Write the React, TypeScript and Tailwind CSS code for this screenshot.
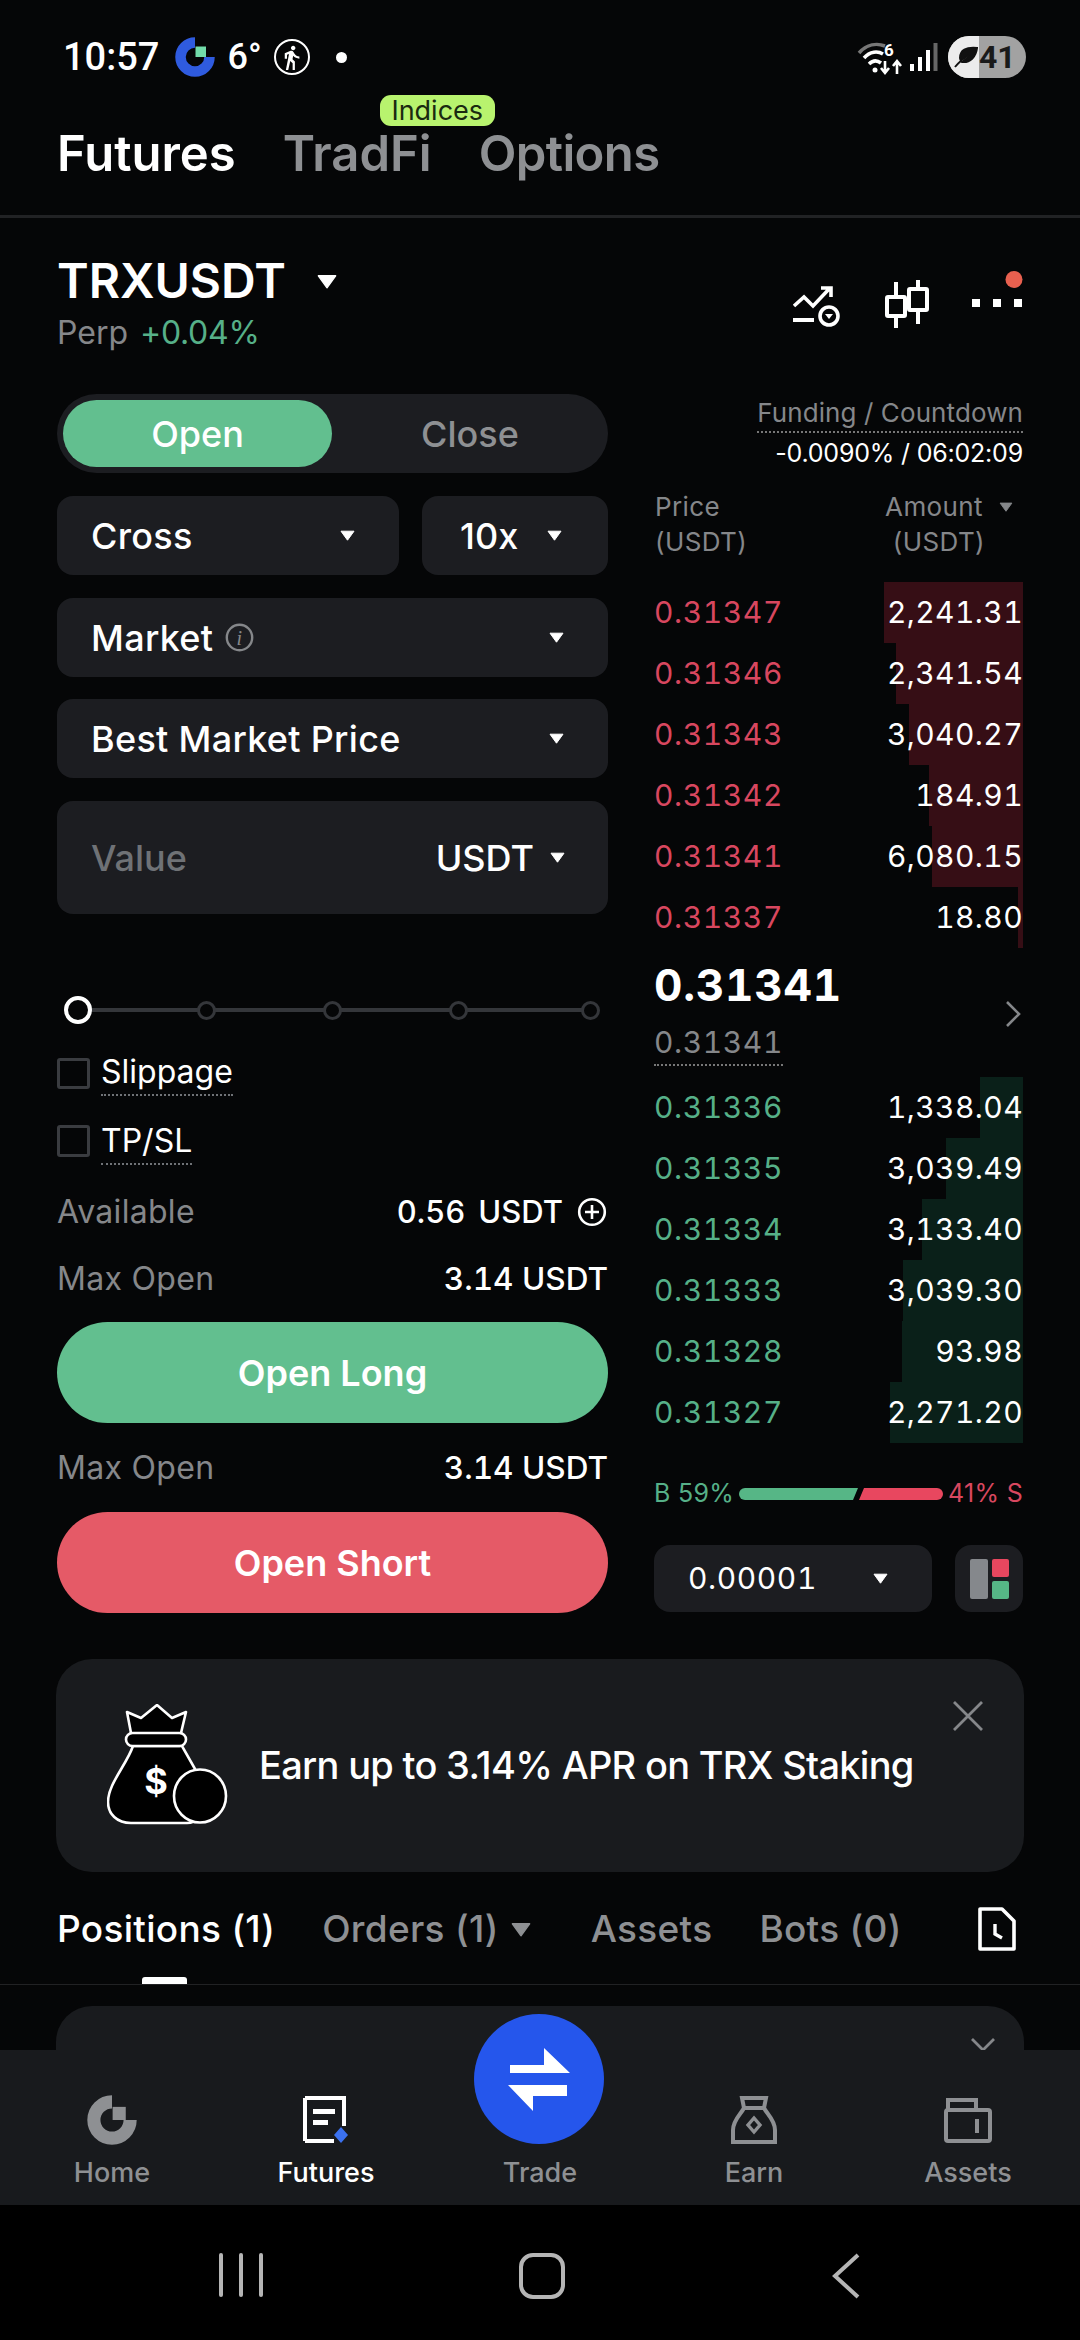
import React from "react";
import { MdDirectionsWalk } from "react-icons/md";

const asks = [
  ["0.31347", "2,241.31", 139],
  ["0.31346", "2,341.54", 127],
  ["0.31343", "3,040.27", 114],
  ["0.31342", "184.91", 94],
  ["0.31341", "6,080.15", 91],
  ["0.31337", "18.80", 5],
] as const;
const bids = [
  ["0.31336", "1,338.04", 43],
  ["0.31335", "3,039.49", 77],
  ["0.31334", "3,133.40", 101],
  ["0.31333", "3,039.30", 120],
  ["0.31328", "93.98", 121],
  ["0.31327", "2,271.20", 133],
] as const;

function Tri({ w = 15, h = 11, color = "#ffffff" }: { w?: number; h?: number; color?: string }) {
  return (
    <svg width={w} height={h} viewBox="0 0 15 11" className="shrink-0">
      <path d="M1 1.2 H14 L7.5 10.2 Z" fill={color} stroke={color} strokeWidth="1" strokeLinejoin="round" />
    </svg>
  );
}

function Logo({ size, ring, square }: { size: number; ring: string; square: string }) {
  return (
    <svg width={size} height={size} viewBox="0 0 40 40" className="shrink-0">
      <path d="M20 5.5 A14.5 14.5 0 1 0 34.5 20" fill="none" stroke={ring} strokeWidth="10.5" />
      <rect x="20.5" y="9.5" width="10.5" height="10.5" fill={square} />
    </svg>
  );
}

function Row({ price, amount, width, up }: { price: string; amount: string; width: number; up: boolean }) {
  return (
    <div className="relative flex h-[61px] items-center justify-between">
      <div className={`absolute inset-y-0 right-0 ${up ? "bg-[#0a2019]" : "bg-[#360e15]"}`} style={{ width }} />
      <span className={`relative text-[30px] tracking-[0.6px] tabular-nums ${up ? "text-[#56b088]" : "text-[#d8475f]"}`}>{price}</span>
      <span className="relative text-[30px] tracking-[0.4px] tabular-nums text-white">{amount}</span>
    </div>
  );
}

function Select({ label, className = "", children }: { label: string; className?: string; children?: React.ReactNode }) {
  return (
    <div className={`flex h-[79px] items-center justify-between rounded-[16px] bg-[#1c1d21] pl-[34px] pr-[44px] ${className}`}>
      <div className="flex items-center gap-[12px] text-[36px] font-medium tracking-[0.3px] text-white">
        {label}
        {children}
      </div>
      <Tri />
    </div>
  );
}

function Info({ label, value, extra }: { label: string; value: React.ReactNode; extra?: React.ReactNode }) {
  return (
    <div className="flex h-[40px] items-center justify-between text-[32px]">
      <span className="tracking-[0.3px] text-[#85878a]">{label}</span>
      <span className="flex items-center font-medium text-white">
        {value}
        {extra}
      </span>
    </div>
  );
}

function Dot({ large, className = "" }: { large?: boolean; className?: string }) {
  return large ? (
    <div className={`relative h-[28px] w-[28px] shrink-0 rounded-full border-[4px] border-white bg-[#050607] ${className}`} />
  ) : (
    <div className={`relative h-[19px] w-[19px] shrink-0 rounded-full border-[3px] border-[#34363a] bg-[#050607] ${className}`} />
  );
}

function NavItem({ label, active, children }: { label: string; active?: boolean; children?: React.ReactNode }) {
  return (
    <div className="flex flex-col items-center">
      <div className="flex h-[48px] items-center justify-center">{children}</div>
      <div className={`mt-[11px] text-[27px] leading-[36px] font-medium ${active ? "text-white" : "text-[#8e9093]"}`}>{label}</div>
    </div>
  );
}

export default function App() {
  return (
    <div className="flex h-[2340px] w-[1080px] flex-col overflow-hidden bg-[#000] [font-family:Inter,sans-serif]">
      <div className="h-[2050px] shrink-0 overflow-hidden bg-[#050607]">
        {/* status bar */}
        <div className="flex h-[114px] items-center justify-between pl-[63px] pr-[54px]">
          <div className="flex items-center">
            <span className="text-[38px] font-medium text-white [font-family:Roboto,sans-serif]">10:57</span>
            <span className="ml-[16px] flex">
              <Logo size={40} ring="#2f5bdf" square="#72dcaa" />
            </span>
            <span className="ml-[12px] text-[36px] font-medium text-white [font-family:Roboto,sans-serif]">6°</span>
            <span className="ml-[12px] flex h-[36px] w-[36px] items-center justify-center rounded-full border-[2px] border-white text-white">
              <MdDirectionsWalk size={27} />
            </span>
            <span className="ml-[26px] h-[11px] w-[11px] rounded-full bg-white" />
          </div>
          <div className="flex items-center">
            <svg width="50" height="36" viewBox="0 0 50 36" className="mt-[2px]">
              <path d="M2 13 C10 4 20 3 28 6" fill="none" stroke="#777" strokeWidth="3.5" />
              <path d="M7 18 C13 11 21 11 26 14" fill="none" stroke="#fff" strokeWidth="3.5" />
              <path d="M12 24 C16 20 20 20 24 23" fill="none" stroke="#fff" strokeWidth="3.5" />
              <circle cx="18" cy="30" r="2.5" fill="#fff" />
              <text x="27" y="16" fontSize="17" fontWeight="700" fill="#fff" fontFamily="Roboto">6</text>
              <path d="M28 21 V33 M24 28 L28 33 L32 28 M40 34 V22 M36 26 L40 21 L44 26" fill="none" stroke="#fff" strokeWidth="2.6" />
            </svg>
            <svg width="30" height="30" viewBox="0 0 30 30" className="ml-[1px] mr-[10px]">
              <rect x="2" y="22" width="4" height="7" fill="#fff" />
              <rect x="10" y="15" width="4" height="14" fill="#fff" />
              <rect x="18" y="8" width="4" height="21" fill="#fff" />
              <rect x="25.5" y="1" width="4" height="28" fill="#666" />
            </svg>
            <div className="relative flex h-[42px] w-[78px] items-center overflow-hidden rounded-full bg-[#a2a2a2]">
              <div className="absolute inset-y-0 left-0 w-[31px] bg-[#ececec]" />
              <svg width="24" height="24" viewBox="0 0 24 24" className="relative ml-[6px]">
                <path d="M23 3 C12 2 6 5 6 13 C6 15 7 16 8 17 C16 18 22 12 23 3 Z M1 22 C5 17 10 13 15 10" fill="#111" stroke="#111" strokeWidth="2" />
              </svg>
              <span className="relative ml-[1px] text-[32px] leading-none font-bold text-[#1a1a1a] [font-family:Roboto,sans-serif]">41</span>
            </div>
          </div>
        </div>

        {/* product tabs */}
        <div className="flex h-[104px] items-start gap-[47px] border-b-[3px] border-[#212224] pl-[57px] pt-[1px]">
          <span className="text-[49px] leading-[78px] font-semibold text-white">Futures</span>
          <span className="relative text-[49px] leading-[78px] font-semibold text-[#8e9093]">
            TradFi
            <span className="absolute left-[97px] top-[-20px] flex h-[31px] w-[115px] items-center justify-center rounded-[11px] bg-[#b8f36e] text-[27px] leading-none font-normal text-[#1a2a10]">
              Indices
            </span>
          </span>
          <span className="text-[49px] leading-[78px] font-semibold tracking-[-0.6px] text-[#8e9093]">Options</span>
        </div>

        {/* symbol */}
        <div className="flex items-start justify-between px-[57px] pt-[40px]">
          <div>
            <div className="flex h-[46px] items-center">
              <span className="text-[48px] font-semibold text-white">TRXUSDT</span>
              <span className="ml-[31px]"><Tri w={20} h={15} /></span>
            </div>
            <div className="mt-[9px] flex h-[40px] items-center gap-[12px] text-[32px]">
              <span className="text-[#85878a]">Perp</span>
              <span className="tracking-[-0.3px] text-[#56b088]">+0.04%</span>
            </div>
          </div>
          <div className="flex h-[66px] items-start">
            <svg width="50" height="42" viewBox="0 0 50 42" className="mt-[27px] text-white">
              <path d="M1 21 L11 12 L20 21 L37 3 M28 3 H38 V12" fill="none" stroke="currentColor" strokeWidth="3.6" />
              <rect x="0" y="33" width="21" height="4" fill="currentColor" />
              <circle cx="36" cy="31" r="9" fill="none" stroke="currentColor" strokeWidth="3.6" />
              <path d="M32 29 H40 L36 34 Z" fill="currentColor" />
            </svg>
            <svg width="44" height="48" viewBox="0 0 44 48" className="ml-[42px] mt-[22px]">
              <path d="M11 2 V48 M33 0 V44" stroke="#fff" strokeWidth="4" />
              <rect x="2" y="17" width="18" height="19" rx="1" fill="#050607" stroke="#fff" strokeWidth="4" />
              <rect x="24" y="9" width="18" height="21" rx="1" fill="#050607" stroke="#fff" strokeWidth="4" />
            </svg>
            <svg width="52" height="40" viewBox="0 0 52 40" className="ml-[42px] mt-[13px]">
              <circle cx="43" cy="8.5" r="8.5" fill="#e8604f" />
              <rect x="1" y="28" width="8" height="8" fill="#fff" />
              <rect x="22" y="28" width="8" height="8" fill="#fff" />
              <rect x="43" y="28" width="8" height="8" fill="#fff" />
            </svg>
          </div>
        </div>

        {/* trade panel & order book */}
        <div className="mt-[41px] flex gap-[46px] px-[57px]">
          <div className="w-[551px]">
            <div className="flex h-[79px] items-center rounded-full bg-[#1c1d21] pl-[6px]">
              <div className="flex h-[67px] w-[269px] items-center justify-center rounded-full bg-[#62bf8f] text-[36px] font-medium text-white">Open</div>
              <div className="flex-1 text-center text-[36px] font-medium text-[#8e9093]">Close</div>
            </div>
            <div className="mt-[23px] flex gap-[23px]">
              <Select label="Cross" className="w-[342px]" />
              <div className="flex h-[79px] flex-1 items-center rounded-[16px] bg-[#1c1d21] pl-[38px] text-[36px] font-medium text-white">
                10x
                <span className="ml-[29px]"><Tri /></span>
              </div>
            </div>
            <Select label="Market" className="mt-[23px]">
              <svg width="29" height="29" viewBox="0 0 29 29">
                <circle cx="14.5" cy="14.5" r="12.7" fill="none" stroke="#85878a" strokeWidth="2.4" />
                <text x="14.5" y="22" textAnchor="middle" fontSize="20" fontStyle="italic" fill="#85878a" fontFamily="Liberation Serif">i</text>
              </svg>
            </Select>
            <Select label="Best Market Price" className="mt-[22px]" />
            <div className="mt-[23px] flex h-[113px] items-center justify-between rounded-[16px] bg-[#1c1d21] pl-[34px] pr-[43px]">
              <span className="text-[36px] font-medium text-[#6f7276]">Value</span>
              <span className="flex items-center gap-[16px] text-[36px] font-medium text-white">USDT<Tri /></span>
            </div>

            <div className="relative mt-[82px] flex h-[28px] items-center pl-[7px]">
              <div className="absolute left-[20px] right-[10px] top-[12px] h-[4px] bg-[#34363a]" />
              <Dot large />
              <Dot className="ml-[105px]" />
              <Dot className="ml-[107px]" />
              <Dot className="ml-[107px]" />
              <Dot className="ml-[113px]" />
            </div>

            <div className="mt-[26px] flex h-[46px] items-start gap-[11px]">
              <div className="mt-[8px] h-[31px] w-[33px] rounded-[3px] border-[3px] border-[#3a3c40]" />
              <span className="h-[46px] border-b-2 border-dotted border-[#6f7276] text-[32px] leading-[44px] text-white">Slippage</span>
            </div>
            <div className="mt-[23px] flex h-[46px] items-start gap-[11px]">
              <div className="mt-[6px] h-[32px] w-[33px] rounded-[3px] border-[3px] border-[#3a3c40]" />
              <span className="h-[46px] border-b-2 border-dotted border-[#6f7276] text-[32px] leading-[44px] text-white">TP/SL</span>
            </div>

            <div className="mt-[27px]">
              <Info
                label="Available"
                value={<span className="flex gap-[13px] tabular-nums text-[31px]"><span>0.56</span><span>USDT</span></span>}
                extra={
                  <svg width="30" height="30" viewBox="0 0 30 30" className="ml-[14px] mr-[1px]">
                    <circle cx="15" cy="15" r="12.8" fill="none" stroke="#fff" strokeWidth="2.6" />
                    <path d="M15 8 V22 M8 15 H22" stroke="#fff" strokeWidth="2.6" />
                  </svg>
                }
              />
            </div>
            <div className="mt-[27px]"><Info label="Max Open" value={<span className="tabular-nums text-[31.5px]">3.14 USDT</span>} /></div>
            <div className="mt-[23px] flex h-[101px] items-center justify-center rounded-full bg-[#62bf8f] text-[36px] font-semibold text-white">Open Long</div>
            <div className="mt-[25px]"><Info label="Max Open" value={<span className="tabular-nums text-[31.5px]">3.14 USDT</span>} /></div>
            <div className="mt-[24px] flex h-[101px] items-center justify-center rounded-full bg-[#e55a67] text-[36px] font-semibold text-white">Open Short</div>
          </div>

          <div className="w-[369px]">
            <div className="flex flex-col items-end">
              <span className="h-[39px] border-b-2 border-dotted border-[#777] text-[26px] leading-[38px] tracking-[0.1px] text-[#85878a]">Funding / Countdown</span>
              <span className="h-[40px] text-[25px] leading-[40px] tracking-[-0.2px] text-white">-0.0090% / 06:02:09</span>
            </div>
            <div className="mt-[16px] flex justify-between text-[26px] leading-[35px] tracking-[0.4px] text-[#85878a]">
              <div className="ml-[1px]">Price<br />(USDT)</div>
              <div className="pr-[10px] text-right">
                <div className="flex items-center gap-[16px]">Amount <Tri w={14} h={10} color="#85878a" /></div>
                <div className="pr-[28px]">(USDT)</div>
              </div>
            </div>
            <div className="mt-[23px]">
              {asks.map(([p, a, w]) => <Row key={p} price={p} amount={a} width={w} up={false} />)}
            </div>
            <div className="relative mt-[12px] h-[50px] text-[44px] leading-[50px] font-bold tracking-[0.8px] tabular-nums text-white">
              0.31341
              <svg width="16" height="28" viewBox="0 0 16 28" className="absolute right-[2px] top-[40px]">
                <path d="M2 2 L14 14 L2 26" fill="none" stroke="#85878a" strokeWidth="2.6" />
              </svg>
            </div>
            <div className="mt-[10px] flex">
              <span className="h-[46px] border-b-2 border-dotted border-[#777] text-[30px] leading-[44px] tracking-[0.6px] tabular-nums text-[#85878a]">0.31341</span>
            </div>
            <div className="mt-[11px]">
              {bids.map(([p, a, w]) => <Row key={p + a} price={p} amount={a} width={w} up />)}
            </div>
            <div className="mt-[36px] flex h-[30px] items-center justify-between text-[25px] tracking-[0.3px]">
              <span className="text-[#56b088]">B 59%</span>
              <div className="flex items-center">
                <svg width="204" height="12" viewBox="0 0 204 12">
                  <path d="M6 0 H119 L114 12 H6 A6 6 0 0 1 6 0 Z" fill="#56b686" />
                  <path d="M125 0 H198 A6 6 0 0 1 198 12 H120 Z" fill="#e8475f" />
                </svg>
              </div>
              <span className="text-[#d8475f]">41% S</span>
            </div>
            <div className="mt-[36px] flex gap-[23px]">
              <div className="flex h-[67px] w-[278px] items-center justify-between rounded-[16px] bg-[#1c1d21] pl-[34px] pr-[44px] text-[30px] tracking-[0.6px] tabular-nums text-white">
                0.00001
                <Tri />
              </div>
              <div className="flex h-[67px] flex-1 items-center justify-center gap-[4px] rounded-[16px] bg-[#1c1d21]">
                <div className="h-[40px] w-[18px] rounded-[2px] bg-[#85888c]" />
                <div className="flex flex-col gap-[4px]">
                  <div className="h-[18px] w-[17px] rounded-[2px] bg-[#e8475f]" />
                  <div className="h-[18px] w-[17px] rounded-[2px] bg-[#56b686]" />
                </div>
              </div>
            </div>
          </div>
        </div>

        {/* banner */}
        <div className="relative mx-[56px] mt-[46px] flex h-[213px] items-center rounded-[36px] bg-[#191b1e] pl-[51px]">
          <svg width="121" height="122" viewBox="0 0 121 122" className="mt-[-2px] shrink-0">
            <path d="M24 29 L20 8 L34 14 L50 1 L65 14 L79 8 L74 29" fill="#000" stroke="#fff" strokeWidth="2.6" strokeLinejoin="round" />
            <path d="M26 42 C20 60 1 80 1 98 C1 110 10 119 24 119 H80 C100 119 100 80 88 65 L75 42 Z" fill="#000" stroke="#fff" strokeWidth="2.6" />
            <rect x="19" y="29" width="60" height="13" rx="6.5" fill="#000" stroke="#fff" strokeWidth="2.6" />
            <text x="49" y="90" textAnchor="middle" fontSize="36" fontWeight="700" fill="#fff" fontFamily="Inter">$</text>
            <ellipse cx="93" cy="92" rx="26" ry="26.5" fill="#000" stroke="#fff" strokeWidth="2.6" />
          </svg>
          <span className="ml-[31px] text-[38px] font-medium tracking-[-0.7px] text-white">Earn up to 3.14% APR on TRX Staking</span>
          <svg width="32" height="32" viewBox="0 0 32 32" className="absolute right-[40px] top-[41px]">
            <path d="M2 2 L30 30 M30 2 L2 30" stroke="#85878a" strokeWidth="2.8" />
          </svg>
        </div>

        {/* position tabs */}
        <div className="relative flex h-[113px] items-start border-b border-[#212224] pl-[57px] pt-[37px] text-[37px] leading-[40px] font-medium tracking-[0.3px]">
          <span className="relative text-white">
            Positions (1)
            <span className="absolute left-[85px] top-[68px] h-[7px] w-[45px] rounded-t-[3px] bg-white" />
          </span>
          <span className="ml-[47px] flex items-center gap-[12px] text-[#8e9093]">Orders (1)<Tri w={20} h={15} color="#8e9093" /></span>
          <span className="ml-[60px] text-[#8e9093]">Assets</span>
          <span className="ml-[47px] text-[#8e9093]">Bots (0)</span>
          <svg width="38" height="44" viewBox="0 0 38 44" className="absolute right-[64px] top-[35px]">
            <path d="M2 2 H24 L36 14 V42 H2 Z" fill="none" stroke="#fff" strokeWidth="3.6" strokeLinejoin="round" />
            <path d="M17 17 V27 L24 31" fill="none" stroke="#fff" strokeWidth="3.4" />
          </svg>
        </div>

        {/* position card, cut by nav */}
        <div className="relative mx-[56px] mt-[21px] h-[160px] rounded-t-[36px] bg-[#191b1e]">
          <svg width="26" height="26" viewBox="0 0 26 26" className="absolute right-[28px] top-[31px]">
            <path d="M2 2 L24 24 M24 2 L2 24" stroke="#85878a" strokeWidth="2.8" />
          </svg>
        </div>
      </div>

      {/* bottom nav */}
      <div className="relative grid h-[155px] shrink-0 grid-cols-5 bg-[#181a1d] px-[5px] pt-[46px]">
        <NavItem label="Home">
          <Logo size={50} ring="#8e9093" square="#8e9093" />
        </NavItem>
        <NavItem label="Futures" active>
          <svg width="48" height="48" viewBox="0 0 48 48">
            <path d="M3 2 H42 V30 M32 45 H3 Z" fill="none" stroke="#fff" strokeWidth="4" />
            <path d="M3 2 V45 M42 2 V28" fill="none" stroke="#fff" strokeWidth="4" />
            <rect x="11" y="13" width="22" height="5" fill="#fff" />
            <rect x="11" y="24" width="15" height="5" fill="#fff" />
            <path d="M39 31 L46 39 L39 47 L32 39 Z" fill="#3b71ef" />
          </svg>
        </NavItem>
        <NavItem label="Trade" />
        <NavItem label="Earn">
          <svg width="46" height="48" viewBox="0 0 46 48">
            <path d="M11 2 H35 L33 12 H13 Z" fill="none" stroke="#8e9093" strokeWidth="4" />
            <path d="M13 12 C10 18 2 24 2 34 V46 H44 V34 C44 24 36 18 33 12" fill="none" stroke="#8e9093" strokeWidth="4" />
            <path d="M23 22 L29 29 L23 36 L17 29 Z" fill="none" stroke="#8e9093" strokeWidth="3.4" />
          </svg>
        </NavItem>
        <NavItem label="Assets">
          <svg width="48" height="46" viewBox="0 0 48 46">
            <path d="M4 14 V3 H32 V14" fill="none" stroke="#8e9093" strokeWidth="4" />
            <rect x="2" y="13" width="44" height="31" rx="2" fill="none" stroke="#8e9093" strokeWidth="4" />
            <rect x="31" y="22" width="4" height="14" fill="#8e9093" />
          </svg>
        </NavItem>
        <div className="absolute left-[474px] top-[-36px] h-[130px] w-[130px] rounded-full bg-[#2556ec]">
          <svg width="130" height="130" viewBox="0 0 130 130">
            <path d="M70 34 L96 59 H36 V51 H70 Z" fill="#fff" />
            <path d="M34 71 H93 V82 H59 V97 Z" fill="#fff" />
          </svg>
        </div>
      </div>

      {/* system nav */}
      <div className="flex flex-1 items-start bg-black pl-[219px] pt-[48px]">
        <div className="flex h-[44px] gap-[16px]">
          <div className="h-[44px] w-[4px] rounded-full bg-[#b5b5b5]" />
          <div className="h-[44px] w-[4px] rounded-full bg-[#b5b5b5]" />
          <div className="h-[44px] w-[4px] rounded-full bg-[#b5b5b5]" />
        </div>
        <div className="ml-[256px] h-[46px] w-[46px] rounded-[14px] border-[4px] border-[#b5b5b5]" />
        <svg width="32" height="46" viewBox="0 0 32 46" className="ml-[265px]">
          <path d="M28 2 L5 23 L28 44" fill="none" stroke="#b5b5b5" strokeWidth="4" />
        </svg>
      </div>
    </div>
  );
}
